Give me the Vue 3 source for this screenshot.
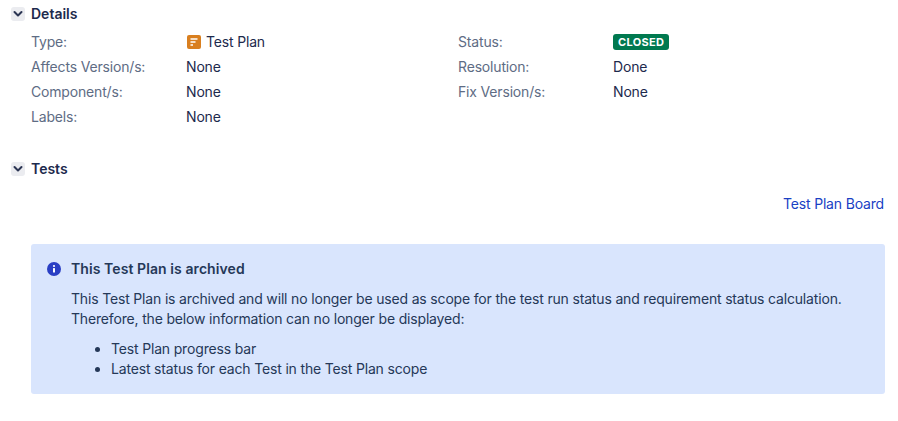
<script setup>
const leftFields = [
  { label: 'Type:', value: 'Test Plan', issueType: true },
  { label: 'Affects Version/s:', value: 'None' },
  { label: 'Component/s:', value: 'None' },
  { label: 'Labels:', value: 'None' },
]

const rightFields = [
  { label: 'Status:', lozenge: 'CLOSED' },
  { label: 'Resolution:', value: 'Done' },
  { label: 'Fix Version/s:', value: 'None' },
]

const missingInfo = ['Test Plan progress bar', 'Latest status for each Test in the Test Plan scope']
</script>

<template>
  <div class="page">
    <section class="details">
      <header class="section-head">
        <button class="toggle" type="button" aria-label="Collapse Details">
          <svg width="10" height="8" viewBox="0 0 10 8" aria-hidden="true">
            <path d="M1.5 2 5 5.5 8.5 2" fill="none" stroke="#2b3553" stroke-width="2" stroke-linecap="round" stroke-linejoin="round" />
          </svg>
        </button>
        <h2>Details</h2>
      </header>

      <div class="fields">
        <dl class="field-col">
          <div v-for="f in leftFields" :key="f.label" class="field">
            <dt>{{ f.label }}</dt>
            <dd>
              <svg v-if="f.issueType" class="type-icon" width="14" height="14" viewBox="0 0 14 14" aria-hidden="true">
                <rect width="14" height="14" rx="2" fill="#d97f1f" />
                <path d="M3.5 4h7M3.5 7h5M3.5 10h2.5" stroke="#fff" stroke-width="1.3" fill="none" />
              </svg>
              {{ f.value }}
            </dd>
          </div>
        </dl>
        <dl class="field-col">
          <div v-for="f in rightFields" :key="f.label" class="field">
            <dt>{{ f.label }}</dt>
            <dd>
              <span v-if="f.lozenge" class="lozenge">{{ f.lozenge }}</span>
              <template v-else>{{ f.value }}</template>
            </dd>
          </div>
        </dl>
      </div>
    </section>

    <section class="tests">
      <header class="section-head">
        <button class="toggle" type="button" aria-label="Collapse Tests">
          <svg width="10" height="8" viewBox="0 0 10 8" aria-hidden="true">
            <path d="M1.5 2 5 5.5 8.5 2" fill="none" stroke="#2b3553" stroke-width="2" stroke-linecap="round" stroke-linejoin="round" />
          </svg>
        </button>
        <h2>Tests</h2>
      </header>

      <div class="board-link-row">
        <a class="board-link" href="#">Test Plan Board</a>
      </div>

      <div class="notice">
        <svg class="notice-icon" width="14" height="14" viewBox="0 0 14 14" aria-hidden="true">
          <circle cx="7" cy="7" r="7" fill="#2a3fc4" />
          <rect x="6" y="6" width="2" height="4.6" rx="0.5" fill="#fff" />
          <circle cx="7" cy="4" r="1.1" fill="#fff" />
        </svg>
        <div class="notice-body">
          <h3>This Test Plan is archived</h3>
          <p>This Test Plan is archived and will no longer be used as scope for the test run status and requirement status calculation. Therefore, the below information can no longer be displayed:</p>
          <ul>
            <li v-for="item in missingInfo" :key="item">{{ item }}</li>
          </ul>
        </div>
      </div>
    </section>
  </div>
</template>

<style>
html,
body {
  background: #fff;
}
</style>

<style scoped>
.page {
  box-sizing: border-box;
  width: 898px;
  height: 421px;
  overflow: hidden;
  padding: 4px 13px 0 11px;
  font-family: Inter, "Liberation Sans", sans-serif;
  font-size: 14px;
  line-height: 20px;
  letter-spacing: -0.17px;
  color: #172b4d;
}

.section-head {
  display: flex;
  align-items: center;
  gap: 6px;
  height: 20px;
}

.section-head h2 {
  margin: 0;
  font-size: 14px;
  font-weight: 600;
  line-height: 20px;
  letter-spacing: 0;
  color: #1d2a4d;
}

.toggle {
  display: flex;
  align-items: center;
  justify-content: center;
  width: 14px;
  height: 14px;
  padding: 0;
  border: 0;
  border-radius: 3px;
  background: #ebecf0;
}

.fields {
  display: grid;
  grid-template-columns: 427px 1fr;
  margin: 5px 0 0 20px;
}

.field-col {
  margin: 0;
}

.field {
  display: grid;
  grid-template-columns: 155px 1fr;
  height: 25px;
  align-items: center;
}

.field dt {
  color: #5e6c84;
}

.field dd {
  display: flex;
  align-items: center;
  gap: 5px;
  margin: 0;
  color: #1d2a4d;
}

.type-icon {
  margin-left: 1px;
}

.lozenge {
  padding: 0 5px;
  height: 16px;
  border-radius: 3px;
  background: #00794f;
  color: #fff;
  font-size: 11px;
  font-weight: 700;
  line-height: 16px;
  letter-spacing: 0.3px;
}

.tests {
  margin-top: 30px;
}

.board-link-row {
  display: flex;
  justify-content: flex-end;
  margin: 15px 1px 0 0;
}

.board-link {
  color: #1a3fc4;
  text-decoration: none;
}

.notice {
  display: flex;
  gap: 10px;
  margin: 30px 0 0 20px;
  padding: 15px 16px 15px 16px;
  border-radius: 3px;
  background: #d9e5fd;
  color: #253858;
}

.notice-icon {
  flex: none;
  margin-top: 3px;
}

.notice-body h3 {
  margin: 0;
  font-size: 14px;
  font-weight: 600;
  line-height: 20px;
  letter-spacing: 0.08px;
}

.notice-body p {
  margin: 10px 0 0;
}

.notice-body ul {
  margin: 10px 0 0;
  padding-left: 40px;
}
</style>
